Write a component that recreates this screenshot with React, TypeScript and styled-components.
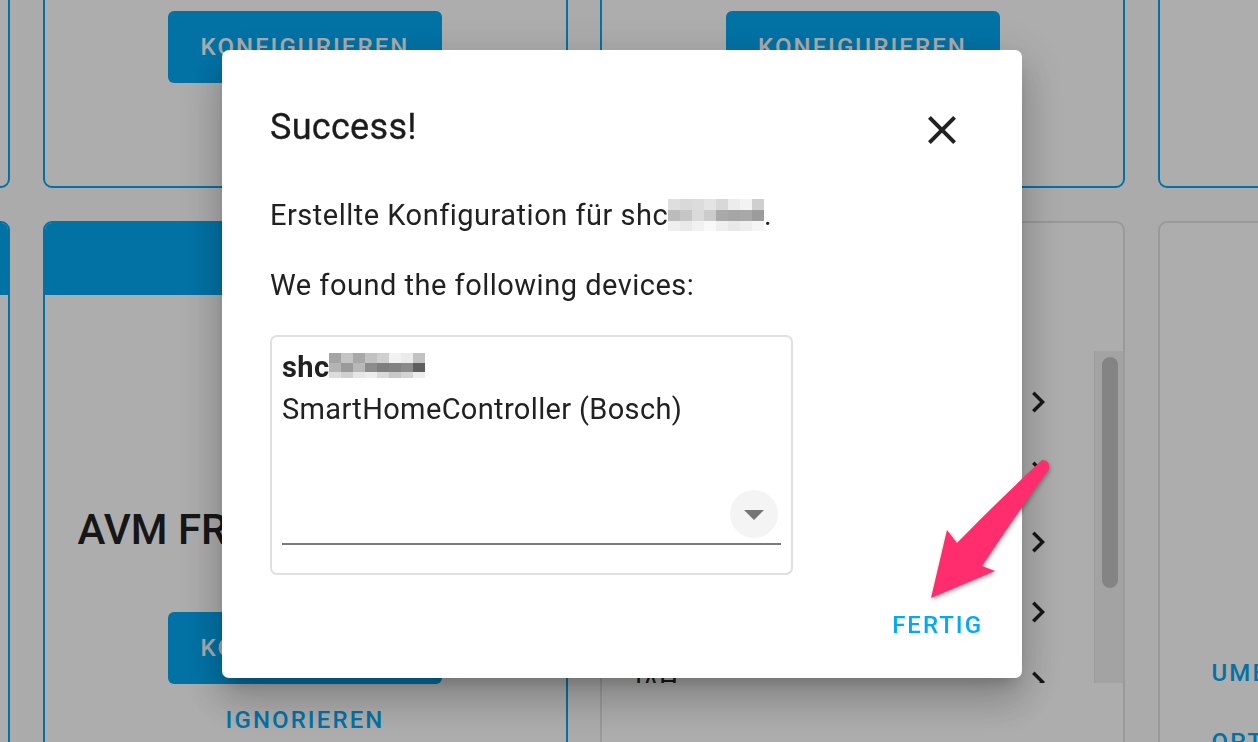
import React from 'react';
import styled, { createGlobalStyle } from 'styled-components';

const GlobalStyle = createGlobalStyle`
  * { box-sizing: border-box; }
  html, body { margin: 0; padding: 0; }
  body {
    width: 1258px;
    height: 742px;
    overflow: hidden;
    background: #fdfdfd;
    font-family: Roboto, "Noto Sans", sans-serif;
    color: #212121;
  }
`;

const ACCENT = '#03a9f4';

/* ---------- background dashboard ---------- */

const Board = styled.div`
  display: grid;
  grid-template-columns: repeat(4, 525px);
  grid-template-rows: 400px 700px;
  column-gap: 32.5px;
  row-gap: 33px;
  margin: -212px 0 0 -515px;
`;

const Card = styled.div<{ $tone: 'accent' | 'plain' }>`
  border: 2px solid ${(p) => (p.$tone === 'accent' ? ACCENT : '#e3e3e3')};
  border-radius: 9px;
  background: #fff;
  display: flex;
  flex-direction: column;
  overflow: hidden;
`;

const CardFoot = styled.div`
  flex: 1;
  display: flex;
  flex-direction: column;
  justify-content: flex-end;
  align-items: center;
  padding-bottom: 103px;
`;

const CardHeader = styled.div`
  height: 72px;
  background: ${ACCENT};
  flex: none;
`;

const CardBody = styled.div`
  display: flex;
  flex-direction: column;
  padding: 214px 33px 0;
`;

const CardTitle = styled.div`
  font-family: Roboto, sans-serif;
  font-size: 42px;
  line-height: 42px;
  font-weight: 500;
  color: #212121;
  white-space: nowrap;
`;

const Actions = styled.div`
  display: flex;
  flex-direction: column;
  align-items: center;
  margin-top: 61px;
  gap: 12px;
`;

const FilledButton = styled.button`
  width: 274px;
  height: 72px;
  flex: none;
  border: none;
  border-radius: 6px;
  background: ${ACCENT};
  color: #fff;
  font-family: Roboto, sans-serif;
  font-weight: 500;
  font-size: 24px;
  letter-spacing: 2.1px;
  text-transform: uppercase;
  padding: 0;
`;

const TextButton = styled.button`
  border: none;
  background: none;
  padding: 0;
  color: ${ACCENT};
  font-family: Roboto, sans-serif;
  font-weight: 500;
  font-size: 24px;
  line-height: 48px;
  letter-spacing: 2.1px;
  text-transform: uppercase;
  text-align: left;
  white-space: nowrap;
`;

const ListTop = styled.div`
  height: 128px;
  flex: none;
`;

const ListFrame = styled.div`
  display: grid;
  grid-template-columns: 1fr 29px;
  height: 332px;
  flex: none;
`;

const ListItems = styled.div`
  overflow: hidden;
  padding-top: 16px;
`;

const ListItem = styled.div`
  height: 70px;
  display: flex;
  align-items: center;
  justify-content: space-between;
  padding: 0 35px 0 33px;
  font-size: 26px;
  color: #212121;
`;

const ScrollTrack = styled.div`
  background: #f1f1f1;
  border-left: 1px solid #e6e6e6;
  padding: 6px 0 0 7px;
`;

const ScrollThumb = styled.div`
  width: 16px;
  height: 231px;
  border-radius: 8px;
  background: #c3c3c3;
`;

const LinkStack = styled.div`
  display: flex;
  flex-direction: column;
  align-items: flex-start;
  gap: 21px;
  padding: 426px 0 0 52px;
`;

/* ---------- dialog ---------- */

const Scrim = styled.div`
  position: fixed;
  inset: 0;
  background: rgba(0, 0, 0, 0.32);
  display: flex;
  align-items: flex-start;
  justify-content: flex-start;
  padding: 50px 0 0 222px;
`;

const Dialog = styled.div`
  width: 800px;
  background: #fff;
  border-radius: 7px;
  padding: 55px 29px 29px 48px;
  display: flex;
  flex-direction: column;
  box-shadow: 0 11px 15px -7px rgba(0, 0, 0, 0.2), 0 24px 38px 3px rgba(0, 0, 0, 0.14),
    0 9px 46px 8px rgba(0, 0, 0, 0.12);
`;

const TitleRow = styled.div`
  display: flex;
  justify-content: space-between;
  align-items: flex-start;
  padding-right: 27px;
`;

const Title = styled.h2`
  margin: 0;
  font-family: Roboto, sans-serif;
  font-weight: 400;
  font-size: 36px;
  line-height: 44px;
  letter-spacing: 0.3px;
  color: #1c1c1c;
  -webkit-text-stroke: 0.3px #1c1c1c;
`;

const CloseButton = styled.button`
  width: 48px;
  height: 48px;
  margin-top: 1px;
  padding: 0;
  border: none;
  background: none;
  color: #212121;
  display: flex;
`;

const Para = styled.p<{ $gap: number }>`
  margin: ${(p) => p.$gap}px 0 0;
  font-size: 29px;
  line-height: 40px;
  letter-spacing: 0.5px;
  color: #212121;
  white-space: nowrap;
`;

const Mosaic = styled.svg<{ $drop: number }>`
  display: inline-block;
  vertical-align: ${(p) => p.$drop}px;
`;

const DeviceBox = styled.div`
  margin-top: 30px;
  width: 523px;
  border: 2px solid #e0e0e0;
  border-radius: 7px;
  padding: 9px 10px 28px;
  display: flex;
  flex-direction: column;
`;

const DeviceLine = styled.div<{ $bold?: boolean }>`
  font-size: 29px;
  line-height: 42px;
  letter-spacing: ${(p) => (p.$bold ? '0.4px' : '0.35px')};
  font-weight: ${(p) => (p.$bold ? 700 : 400)};
  color: #212121;
  white-space: nowrap;
`;

const SelectRow = styled.div`
  margin-top: 60px;
  display: flex;
  justify-content: flex-end;
  padding-right: 3px;
`;

const DropButton = styled.div`
  width: 48px;
  height: 48px;
  border-radius: 50%;
  background: #f4f4f4;
  color: #757575;
  display: flex;
`;

const Underline = styled.div`
  margin-top: 5px;
  height: 2px;
  background: #7a7a7a;
`;

const Footer = styled.div`
  margin-top: 26px;
  display: flex;
  justify-content: flex-end;
`;

const DialogButton = styled(TextButton)`
  padding: 0 10px 0 12px;
  color: ${ACCENT};
  letter-spacing: 2px;
`;

const Annotation = styled.svg`
  position: fixed;
  left: 0;
  top: 0;
  pointer-events: none;
  filter: drop-shadow(1px 2px 2px rgba(0, 0, 0, 0.3));
`;

/* ---------- pieces ---------- */

const Chevron = () => (
  <svg width="42" height="42" viewBox="0 0 24 24" fill="#212121">
    <path d="M8.59,16.58L13.17,12L8.59,7.41L10,6L16,12L10,18L8.59,16.58Z" />
  </svg>
);

type MosaicProps = { rows: string[][]; heights: number[]; cell: number; drop: number };
const Pixelated = ({ rows, heights, cell, drop }: MosaicProps) => {
  const w = rows[0].length * cell;
  const h = heights.reduce((a, b) => a + b, 0);
  let y = 0;
  return (
    <Mosaic $drop={drop} width={w} height={h} viewBox={`0 0 ${w} ${h}`}>
      {rows.map((r, ri) => {
        const top = y;
        y += heights[ri];
        return r.map((c, ci) => (
          <rect key={`${ri}-${ci}`} x={ci * cell} y={top} width={cell} height={heights[ri]} fill={c} />
        ));
      })}
    </Mosaic>
  );
};

const mosaicA = [
  ['#dedede', '#d9d9d9', '#dcdcdc', '#e4e4e4', '#d8d8d8', '#ececec', '#f3f3f3', '#cfcfcf'],
  ['#bcbcbc', '#c6c6c6', '#dadada', '#cccccc', '#a9a9a9', '#a6a6a6', '#a8a8a8', '#9c9c9c'],
  ['#efefef', '#e9e9e9', '#f1f1f1', '#f8f8f8', '#efefef', '#e8e8e8', '#eeeeee', '#f5f5f5'],
];

const mosaicB = [
  ['#a4a4a4', '#c4c4c4', '#a8a8a8', '#c2c2c2', '#cfcfcf', '#f2f2f2', '#ebebeb', '#c2c2c2'],
  ['#b4b4b4', '#9a9a9a', '#b8b8b8', '#8c8c8c', '#7f7f7f', '#828282', '#8a8a8a', '#5e5e5e'],
  ['#dcdcdc', '#d0d0d0', '#e6e6e6', '#ececec', '#dadada', '#c8c8c8', '#d4d4d4', '#ececec'],
];

const listLabels = ['Fenster Küche', 'Heizung Bad', 'Licht Flur', 'Rollladen', 'IAH'];

const TopCard = () => (
  <Card $tone="accent">
    <CardFoot>
      <FilledButton>Konfigurieren</FilledButton>
    </CardFoot>
  </Card>
);

const DiscoveryCard = ({ title }: { title: string }) => (
  <Card $tone="accent">
    <CardHeader />
    <CardBody>
      <CardTitle>{title}</CardTitle>
      <Actions>
        <FilledButton>Konfigurieren</FilledButton>
        <TextButton>Ignorieren</TextButton>
      </Actions>
    </CardBody>
  </Card>
);

export default function App() {
  return (
    <>
      <GlobalStyle />
      <Board>
        <TopCard />
        <TopCard />
        <TopCard />
        <TopCard />
        <DiscoveryCard title="Philips Hue" />
        <DiscoveryCard title="AVM FRITZ!Box Tools" />
        <Card $tone="plain">
          <ListTop />
          <ListFrame>
            <ListItems>
              {listLabels.map((l) => (
                <ListItem key={l}>
                  <span>{l}</span>
                  <Chevron />
                </ListItem>
              ))}
            </ListItems>
            <ScrollTrack>
              <ScrollThumb />
            </ScrollTrack>
          </ListFrame>
        </Card>
        <Card $tone="plain">
          <LinkStack>
            <TextButton>Umbenennen</TextButton>
            <TextButton>Optionen</TextButton>
          </LinkStack>
        </Card>
      </Board>

      <Scrim>
        <Dialog>
          <TitleRow>
            <Title>Success!</Title>
            <CloseButton aria-label="Schließen">
              <svg width="48" height="48" viewBox="0 0 24 24" fill="currentColor">
                <path d="M19,6.41L17.59,5L12,10.59L6.41,5L5,6.41L10.59,12L5,17.59L6.41,19L12,13.41L17.59,19L19,17.59L13.41,12L19,6.41Z" />
              </svg>
            </CloseButton>
          </TitleRow>
          <Para $gap={41}>
            Erstellte Konfiguration für shc
            <Pixelated rows={mosaicA} heights={[11, 11, 10]} cell={12} drop={-6} />.
          </Para>
          <Para $gap={30}>We found the following devices:</Para>
          <DeviceBox>
            <DeviceLine $bold>
              shc
              <Pixelated rows={mosaicB} heights={[10, 9, 6]} cell={12} drop={-1} />
            </DeviceLine>
            <DeviceLine>SmartHomeController (Bosch)</DeviceLine>
            <SelectRow>
              <DropButton>
                <svg width="48" height="48" viewBox="0 0 24 24" fill="currentColor">
                  <path d="M7,10L12,15L17,10H7Z" />
                </svg>
              </DropButton>
            </SelectRow>
            <Underline />
          </DeviceBox>
          <Footer>
            <DialogButton>Fertig</DialogButton>
          </Footer>
        </Dialog>
      </Scrim>

      <Annotation width="1258" height="742" viewBox="0 0 1258 742">
        <path
          d="M1042 460 Q1000 499 957 543 L947 530 L931 598 L995 571 L982 566 Q1016 515 1049 469 Q1050 460 1042 460 Z"
          fill="#ff2d6e"
        />
      </Annotation>
    </>
  );
}
